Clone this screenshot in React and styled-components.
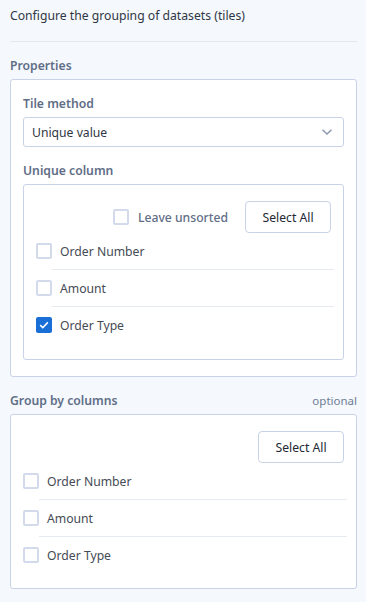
import { createGlobalStyle, styled } from 'styled-components';

const GlobalStyle = createGlobalStyle`
  body {
    margin: 0;
    background-color: #f5f8fd;
    font-family: "Noto Sans", "Open Sans", sans-serif;
    font-size: 12.2px;
    color: #333a45;
  }
  * {
    box-sizing: border-box;
  }
`;

const Page = styled.div`
  padding: 0 9px 12px 10px;
`;

const Intro = styled.div`
  padding: 6px 0 15px;
  line-height: 20px;
  border-bottom: 1px solid #e3e8f1;
  color: #2f3744;
`;

const SectionHead = styled.div`
  display: flex;
  align-items: center;
  justify-content: space-between;
  margin: 15px 0 4px;
  line-height: 18px;
`;

const Label = styled.div`
  font-weight: 600;
  color: #5f6e86;
  line-height: 18px;
  margin-bottom: ${({ $gap }) => $gap ?? 0}px;
`;

const Hint = styled.span`
  font-size: 11.5px;
  color: #6f7d94;
`;

const Box = styled.div`
  background-color: #fff;
  border: 1px solid #c9d3e7;
  border-radius: 3px;
  padding: ${({ $pad }) => $pad};
`;

const Select = styled.div`
  display: flex;
  align-items: center;
  justify-content: space-between;
  height: 30px;
  padding: 0 10px 0 8px;
  border: 1px solid #c9d3e7;
  border-radius: 3px;
  margin-bottom: 15px;
  color: #2f3744;
`;

const Toolbar = styled.div`
  display: flex;
  align-items: center;
  justify-content: flex-end;
  gap: 17px;
  padding-right: ${({ $right }) => $right}px;
`;

const SelectAllButton = styled.button`
  height: 32px;
  width: 86px;
  border: 1px solid #c9d3e7;
  border-radius: 4px;
  background-color: #fff;
  font: inherit;
  color: #222833;
`;

const Unsorted = styled.label`
  display: flex;
  align-items: center;
  gap: 9px;
  font-weight: 500;
  color: #5f6e86;
`;

const Row = styled.div`
  display: flex;
  align-items: stretch;
`;

const RowLabel = styled.div`
  flex: 1;
  display: flex;
  align-items: center;
  height: ${({ $last }) => ($last ? 36 : 37)}px;
  padding-left: 8px;
  border-bottom: ${({ $last }) => ($last ? 'none' : '1px solid #e6eaf2')};
  color: #454b55;
`;

const CheckCell = styled.div`
  display: flex;
  align-items: center;
  height: 36px;
`;

const Box16 = styled.span`
  display: inline-flex;
  align-items: center;
  justify-content: center;
  width: 16px;
  height: 16px;
  border-radius: 2px;
  border: ${({ $on }) => ($on ? 'none' : '2px solid #d2daeb')};
  background-color: ${({ $on }) => ($on ? '#1a6fd6' : '#fff')};
`;

function Checkbox({ checked }) {
  return (
    <Box16 $on={checked}>
      {checked && (
        <svg width="12" height="12" viewBox="0 0 12 12">
          <path d="M2.2 6.2 L4.8 8.7 L9.8 3.4" fill="none" stroke="#fff" strokeWidth="1.6" />
        </svg>
      )}
    </Box16>
  );
}

function Chevron() {
  return (
    <svg width="12" height="8" viewBox="0 0 12 8">
      <path d="M1.5 1.8 L6 6 L10.5 1.8" fill="none" stroke="#8a97b0" strokeWidth="1.5" />
    </svg>
  );
}

function ColumnList({ items }) {
  return items.map((item, i) => (
    <Row key={item.name}>
      <CheckCell>
        <Checkbox checked={item.checked} />
      </CheckCell>
      <RowLabel $last={i === items.length - 1}>{item.name}</RowLabel>
    </Row>
  ));
}

const uniqueColumns = [
  { name: 'Order Number', checked: false },
  { name: 'Amount', checked: false },
  { name: 'Order Type', checked: true },
];

const groupColumns = [
  { name: 'Order Number', checked: false },
  { name: 'Amount', checked: false },
  { name: 'Order Type', checked: false },
];

export default function App() {
  return (
    <>
      <GlobalStyle />
      <Page>
        <Intro>Configure the grouping of datasets (tiles)</Intro>

        <SectionHead>
          <Label>Properties</Label>
        </SectionHead>
        <Box $pad="15px 12px 16px">
          <Label $gap={4}>Tile method</Label>
          <Select>
            <span>Unique value</span>
            <Chevron />
          </Select>
          <Label $gap={4}>Unique column</Label>
          <Box $pad="16px 9px 16px 12px">
            <Toolbar $right={3}>
              <Unsorted>
                <Checkbox checked={false} />
                Leave unsorted
              </Unsorted>
              <SelectAllButton>Select All</SelectAllButton>
            </Toolbar>
            <ColumnList items={uniqueColumns} />
          </Box>
        </Box>

        <SectionHead>
          <Label>Group by columns</Label>
          <Hint>optional</Hint>
        </SectionHead>
        <Box $pad="16px 9px 15px 12px">
          <Toolbar $right={3}>
            <SelectAllButton>Select All</SelectAllButton>
          </Toolbar>
          <ColumnList items={groupColumns} />
        </Box>
      </Page>
    </>
  );
}
